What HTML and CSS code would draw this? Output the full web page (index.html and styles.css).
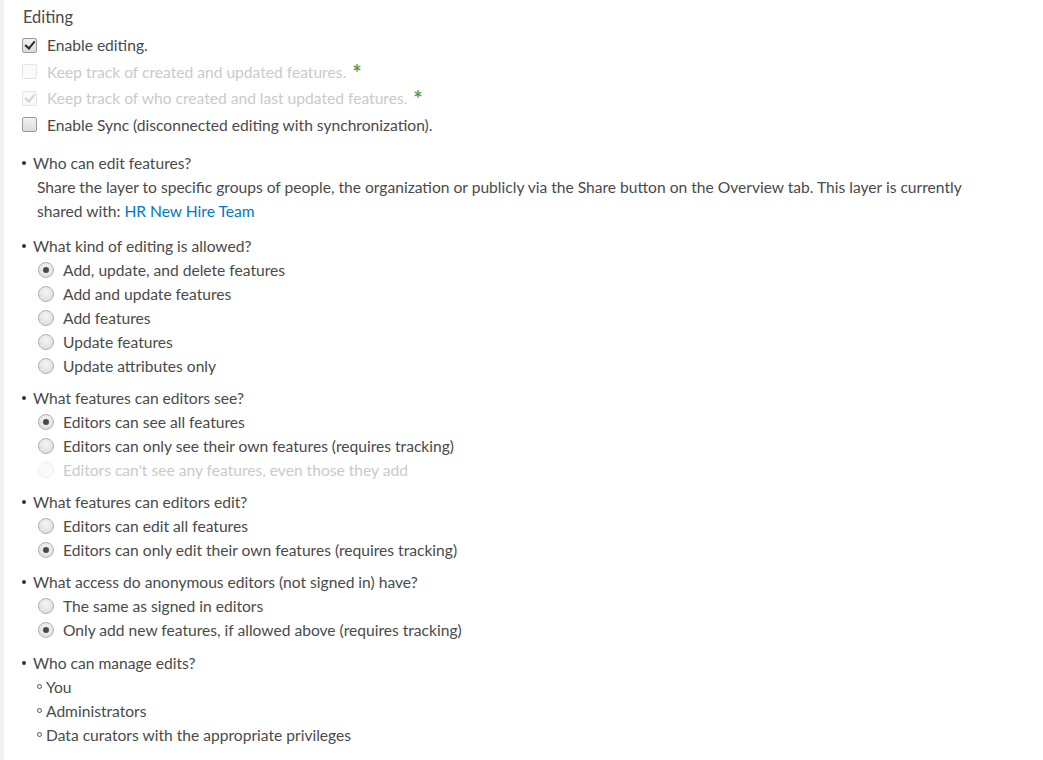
FILE: index.html
```html
<!DOCTYPE html>
<html>
<head>
<meta charset="utf-8">
<link rel="stylesheet" href="styles.css">
</head>
<body>
<div class="panel">
  <div class="title">Editing</div>
  <div class="checks">
    <div class="crow"><span class="cb checked"></span><span>Enable editing.</span></div>
    <div class="crow disabled"><span class="cb"></span><span>Keep track of created and updated features.</span><span class="star">*</span></div>
    <div class="crow disabled"><span class="cb checked"></span><span>Keep track of who created and last updated features.</span><span class="star">*</span></div>
    <div class="crow"><span class="cb"></span><span>Enable Sync (disconnected editing with synchronization).</span></div>
  </div>

  <ul class="sections">
    <li class="sec">
      <div class="q"><span class="dot"></span>Who can edit features?</div>
      <p class="desc">Share the layer to specific groups of people, the organization or publicly via the Share button on the Overview tab. This layer is currently shared with: <a class="link">HR New Hire Team</a></p>
    </li>
    <li class="sec">
      <div class="q"><span class="dot"></span>What kind of editing is allowed?</div>
      <div class="rrow"><span class="rb on"></span>Add, update, and delete features</div>
      <div class="rrow"><span class="rb"></span>Add and update features</div>
      <div class="rrow"><span class="rb"></span>Add features</div>
      <div class="rrow"><span class="rb"></span>Update features</div>
      <div class="rrow"><span class="rb"></span>Update attributes only</div>
    </li>
    <li class="sec">
      <div class="q"><span class="dot"></span>What features can editors see?</div>
      <div class="rrow"><span class="rb on"></span>Editors can see all features</div>
      <div class="rrow"><span class="rb"></span>Editors can only see their own features (requires tracking)</div>
      <div class="rrow disabled"><span class="rb"></span>Editors can't see any features, even those they add</div>
    </li>
    <li class="sec">
      <div class="q"><span class="dot"></span>What features can editors edit?</div>
      <div class="rrow"><span class="rb"></span>Editors can edit all features</div>
      <div class="rrow"><span class="rb on"></span>Editors can only edit their own features (requires tracking)</div>
    </li>
    <li class="sec">
      <div class="q"><span class="dot"></span>What access do anonymous editors (not signed in) have?</div>
      <div class="rrow"><span class="rb"></span>The same as signed in editors</div>
      <div class="rrow"><span class="rb on"></span>Only add new features, if allowed above (requires tracking)</div>
    </li>
    <li class="sec">
      <div class="q"><span class="dot"></span>Who can manage edits?</div>
      <div class="srow"><span class="ring"></span>You</div>
      <div class="srow"><span class="ring"></span>Administrators</div>
      <div class="srow"><span class="ring"></span>Data curators with the appropriate privileges</div>
    </li>
  </ul>
</div>
</body>
</html>
```
FILE: styles.css
```css
html, body {
  margin: 0;
  padding: 0;
  background: #ffffff;
}
body {
  font-family: "Lato", "Open Sans", sans-serif;
  font-size: 15.6px;
  color: #4a4a4a;
  height: 760px;
  overflow: hidden;
}
.panel {
  border-left: 4px solid #f2f2f2;
  height: 760px;
  padding: 5px 40px 0 18px;
  box-sizing: border-box;
}
.title {
  font-size: 16.4px;
  line-height: 24px;
  margin-left: 1px;
}
.checks {
  margin-top: 3px;
}
.crow {
  display: flex;
  align-items: center;
  height: 26.5px;
}
.crow.disabled {
  color: #cacaca;
}
.cb {
  width: 13px;
  height: 13px;
  border: 1px solid #9a9a9a;
  border-radius: 2px;
  background: linear-gradient(#f2f2f2, #dcdcdc);
  margin-right: 10px;
  position: relative;
  flex: none;
}
.crow.disabled .cb {
  border-color: #e4e4e4;
  background: #fafafa;
}
.cb.checked::after {
  content: "";
  position: absolute;
  left: 4px;
  top: 0px;
  width: 4px;
  height: 8px;
  border: solid #2b2b2b;
  border-width: 0 2.5px 2.5px 0;
  transform: rotate(40deg);
}
.crow.disabled .cb.checked::after {
  border-color: #d4d4d4;
}
.star {
  color: #5a9a4c;
  font-size: 22px;
  font-weight: 700;
  margin-left: 6px;
  line-height: 1;
  position: relative;
  top: 1px;
}
.sections {
  list-style: none;
  margin: 13px 0 0 0;
  padding: 0;
}
.sec {
  margin-bottom: 8.2px;
}
.q {
  display: flex;
  align-items: center;
  height: 24px;
}
.dot {
  width: 4px;
  height: 4px;
  border-radius: 50%;
  background: #333;
  margin-right: 7px;
  flex: none;
}
.desc {
  margin: 0 0 10.8px 15px;
  line-height: 24px;
}
.link {
  color: #0079c1;
  text-decoration: none;
}
.rrow {
  display: flex;
  align-items: center;
  height: 24px;
  padding-left: 16px;
}
.rrow.disabled {
  color: #cacaca;
}
.rb {
  width: 14px;
  height: 14px;
  border: 1px solid #b0b0b0;
  border-radius: 50%;
  background: radial-gradient(circle at 50% 35%, #f4f4f4, #dadada);
  margin-right: 9px;
  position: relative;
  flex: none;
}
.rrow.disabled .rb {
  border-color: #f0f0f0;
  background: #fbfbfb;
}
.rb.on::after {
  content: "";
  position: absolute;
  left: 4px;
  top: 4px;
  width: 6px;
  height: 6px;
  border-radius: 50%;
  background: #4a4a4a;
}
.srow {
  display: flex;
  align-items: center;
  height: 24px;
  padding-left: 15px;
}
.ring {
  width: 3px;
  height: 3px;
  border: 1px solid #555;
  border-radius: 50%;
  margin-right: 4px;
  flex: none;
}
```
